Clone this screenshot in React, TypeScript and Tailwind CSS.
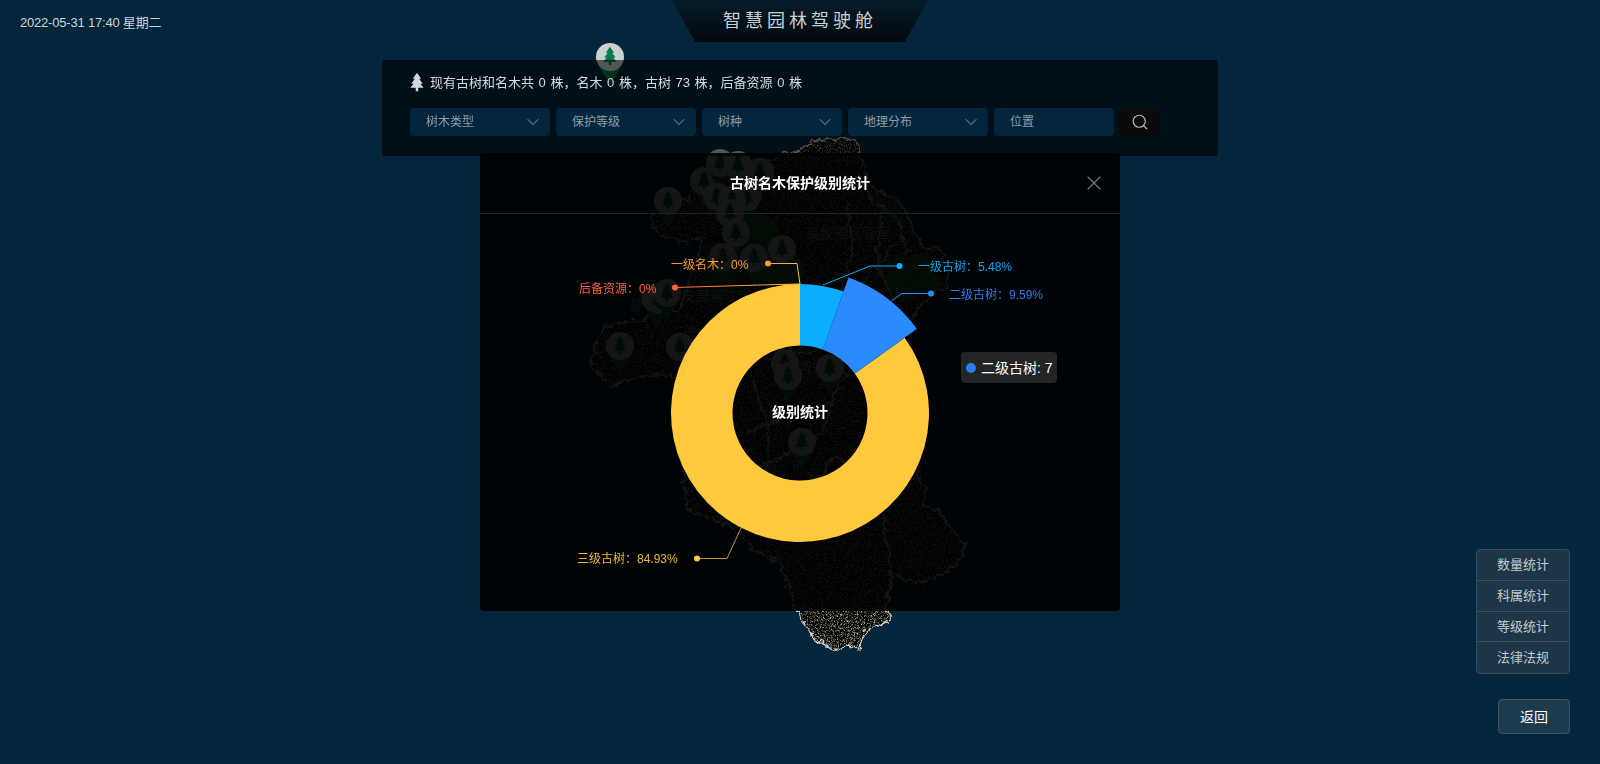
import { Search, ChevronDown, X } from "lucide-react";

const FONT = "font-['Liberation_Sans','Noto_Sans_CJK_SC',sans-serif]";
const TREE = "M12 1 L17 8 H14.5 L19 14 H16 L20 19 H13.5 V23 H10.5 V19 H4 L8 14 H5 L9.5 8 H7 Z";

const ISLAND =
  "M813 137 L852 137 L858 150 L867 185 L900 200 L908 220 L920 245 L940 247 L947 285 L930 290 L913 310 L905 345 L915 420 L917 480 L923 483 L923 503 L937 510 L950 528 L963 540 L958 560 L940 572 L917 582 L905 578 L890 570 L885 597 L883 607 L887 612 L887 617 L878 623 L868 627 L863 630 L857 647 L847 643 L835 648 L823 643 L810 633 L800 620 L797 612 L790 597 L785 580 L778 560 L767 556 L750 547 L743 535 L730 525 L707 515 L685 507 L683 478 L680 430 L690 375 L660 373 L640 373 L610 385 L588 363 L595 335 L610 320 L643 318 L677 307 L690 270 L700 235 L683 240 L660 235 L648 218 L657 207 L683 198 L717 170 L760 160 L790 150 Z";

const PINS: [number, number][] = [
  [610, 57], [668, 201], [704, 181], [720, 163], [738, 165], [760, 172], [717, 197], [747, 197], [732, 200],
  [730, 213], [736, 233], [723, 257], [754, 258], [782, 249], [655, 298], [658, 300], [667, 293], [620, 346],
  [680, 347], [785, 363], [788, 376], [830, 368], [802, 442],
];

const ROADS = [
  "M855 170 L870 200 L895 215 L905 250",
  "M845 200 L850 250 L835 300 L825 350",
  "M880 205 L875 260 L890 300",
  "M895 240 L860 280 L850 300",
  "M745 430 L790 412 L830 400 L845 370",
  "M755 465 L800 445 L820 430 L835 385",
  "M765 360 L790 350 L815 350",
  "M805 470 L815 480 L830 455 L845 460",
  "M880 520 L888 560 L887 600",
  "M750 380 L762 410 L768 450 L760 480",
  "M905 420 L880 470 L882 520",
];

function arc(r0: number, r1: number, a0: number, a1: number) {
  const cx = 800;
  const cy = 413;
  const p = (r: number, a: number) => {
    const t = (a * Math.PI) / 180;
    return `${(cx + r * Math.sin(t)).toFixed(2)} ${(cy - r * Math.cos(t)).toFixed(2)}`;
  };
  const large = a1 - a0 > 180 ? 1 : 0;
  return `M${p(r1, a0)} A${r1} ${r1} 0 ${large} 1 ${p(r1, a1)} L${p(r0, a1)} A${r0} ${r0} 0 ${large} 0 ${p(r0, a0)} Z`;
}

function Pin({ x, y }: { x: number; y: number }) {
  return (
    <g transform={`translate(${x} ${y})`}>
      <path d="M-13 3 C-11 12 -4 20 0 27 C4 20 11 12 13 3 Z" fill="#0c7a48" />
      <circle r="14" fill="#dcdede" opacity="0.92" />
      <path d={TREE} transform="translate(-10 -11) scale(0.83)" fill="#0a7a4c" />
    </g>
  );
}

function MapLayer() {
  return (
    <svg className="absolute inset-0" width="1600" height="764" viewBox="0 0 1600 764">
      <defs>
        <filter id="speck" x="0" y="0" width="100%" height="100%" colorInterpolationFilters="sRGB">
          <feTurbulence type="fractalNoise" baseFrequency="2.3" numOctaves="1" seed="4" />
          <feColorMatrix values="2.4 0 0 0 -1.1  2.3 0.1 0 0 -1.1  2.1 0 0.25 0 -1.1  0 0 0 0 1" />
        </filter>
        <filter id="rough" x="-5%" y="-5%" width="110%" height="110%">
          <feTurbulence type="turbulence" baseFrequency="0.09" numOctaves="2" seed="7" result="t" />
          <feDisplacementMap in="SourceGraphic" in2="t" scale="9" xChannelSelector="R" yChannelSelector="G" />
        </filter>
        <mask id="isleMask" maskUnits="userSpaceOnUse" x="0" y="0" width="1600" height="764">
          <path d={ISLAND} fill="#ffffff" filter="url(#rough)" />
        </mask>
        <clipPath id="isle">
          <path d={ISLAND} />
        </clipPath>
      </defs>
      <rect x="570" y="130" width="410" height="530" filter="url(#speck)" mask="url(#isleMask)" />
      <g filter="url(#rough)">
        <g clipPath="url(#isle)">
          <path d="M735 205 L770 215 L800 262 L803 285 L760 280 L745 240 Z" fill="#0a8a30" opacity="0.75" />
          <path d="M885 258 L925 250 L940 285 L905 300 L880 290 Z" fill="#0a8a30" opacity="0.7" />
          <path d="M870 190 L898 205 L905 225 L885 220 Z" fill="#0a8a30" opacity="0.55" />
          <path d="M700 240 L730 260 L750 290 L700 300 Z" fill="#0a8a30" opacity="0.35" />
        </g>
        {ROADS.map((d) => (
          <path key={d} d={d} fill="none" stroke="#b8b8ae" strokeWidth="2" />
        ))}
        <path d={ISLAND} fill="none" stroke="#cfcfcf" strokeWidth="1.6" />
      </g>
      <g className={FONT} fill="#ffffff" fontSize="14" opacity="0.45">
        <text x="806" y="238">高校园区管理</text>
        <text x="682" y="301">安局蓉江新</text>
        <text x="630" y="310">赣</text>
        <text x="683" y="336">善</text>
        <text x="798" y="373">蓉安</text>
        <text x="765" y="473">真</text>
      </g>
      {PINS.map(([x, y]) => (
        <Pin key={`${x}-${y}`} x={x} y={y} />
      ))}
    </svg>
  );
}

function DropDown({ label }: { label: string }) {
  return (
    <div className="w-[140px] h-7 rounded-[4px] bg-[#04263c] pl-4 pr-[7px] flex items-center justify-between text-xs text-[#8f9ca6]">
      <span>{label}</span>
      <ChevronDown size={20} strokeWidth={1.1} className="text-[#8f9ca6]" />
    </div>
  );
}

function Chart() {
  return (
    <svg className="block" width="640" height="397" viewBox="480 214 640 397">
      <defs>
        <linearGradient id="lo" gradientUnits="userSpaceOnUse" x1="768" y1="263" x2="800" y2="283">
          <stop offset="0" stopColor="#ff9a2e" />
          <stop offset="1" stopColor="#ffc93c" />
        </linearGradient>
        <linearGradient id="lr" gradientUnits="userSpaceOnUse" x1="675" y1="287" x2="800" y2="283">
          <stop offset="0" stopColor="#ff5f3f" />
          <stop offset="1" stopColor="#ffc93c" />
        </linearGradient>
      </defs>
      <path d={arc(67.5, 129, 54.25, 360)} fill="#ffc93d" />
      <path d={arc(67.5, 129, 0, 19.73)} fill="#0badff" />
      <path d={arc(67.5, 144, 19.73, 54.25)} fill="#2a8bff" />

      <polyline points="768,263.5 797,263.5 800,284" fill="none" stroke="url(#lo)" />
      <polyline points="675,287.5 760,285 800,284" fill="none" stroke="url(#lr)" />
      <polyline points="899.5,266 870,266 823,285" fill="none" stroke="#0badff" />
      <polyline points="931,293.5 902,293.5 892,300.5" fill="none" stroke="#2a8bff" />
      <polyline points="697,558.5 727,558.5 741,528" fill="none" stroke="#ffc93d" strokeOpacity="0.75" />

      <circle cx="768" cy="263.5" r="3" fill="#ff9a2e" />
      <circle cx="675" cy="287.5" r="3" fill="#ff5f3f" />
      <circle cx="899.5" cy="266" r="3" fill="#0badff" />
      <circle cx="931" cy="293.5" r="3" fill="#2a8bff" />
      <circle cx="697" cy="558.5" r="3" fill="#ffc93d" />

      <g className={`${FONT} text-xs`}>
        <text x="671" y="269" fill="#ff9a2e">一级名木：0%</text>
        <text x="579" y="293" fill="#ff5f3f">后备资源：0%</text>
        <text x="918" y="271" fill="#0ba5f0">一级古树：5.48%</text>
        <text x="949" y="299" fill="#2a7de8">二级古树：9.59%</text>
        <text x="577" y="563" fill="#eeb836">三级古树：84.93%</text>
      </g>
      <text x="800" y="417" textAnchor="middle" fill="#ffffff" fontSize="14" fontWeight="700" className={FONT}>
        级别统计
      </text>
    </svg>
  );
}

function Modal() {
  return (
    <div className="absolute left-[480px] top-[153px] w-[640px] h-[458px] z-20 rounded-[4px] bg-black/90">
      <div className="relative h-[61px] border-b border-[#1f2222] flex items-center justify-center">
        <span className="text-sm font-bold text-white">古树名木保护级别统计</span>
        <X size={24} strokeWidth={1.1} className="absolute right-[14px] top-[18px] text-[#77797a]" />
      </div>
      <Chart />
      <div className="absolute left-[481px] top-[199px] h-[31px] w-[96px] rounded-[4px] bg-[#232426] flex items-center pl-[5px] text-sm text-white">
        <span className="w-2.5 h-2.5 rounded-full bg-[#2a7de8] mr-[5px]" />
        二级古树: 7
      </div>
    </div>
  );
}

export default function App() {
  return (
    <div className={`relative w-full h-[764px] overflow-hidden bg-[#04263c] ${FONT}`}>
      <MapLayer />

      <div className="relative z-10 grid grid-cols-[1fr_256px_1fr] h-[42px]">
        <div className="pl-5 pt-[14px] text-[13px] leading-[17px] tracking-[-0.2px] text-[#cdd4d8]">2022-05-31 17:40 星期二</div>
        <div className="[clip-path:polygon(0_0,100%_0,91%_100%,9%_100%)] bg-gradient-to-b from-[#061c2b] to-[#03090e] flex items-center justify-center text-lg tracking-[4px] text-[#c8d0d4]">
          智慧园林驾驶舱
        </div>
        <div />
      </div>

      <div className="relative z-10 mt-[18px] ml-[382px] w-[836px] h-[96px] bg-black/60 pl-[28px]">
        <div className="flex items-center h-[46px] text-[13px] [word-spacing:1px] text-[#d6d9db]">
          <svg width="20" height="20" viewBox="0 0 24 24" className="mr-[3px] -mt-[2px] -ml-[3px]">
            <path d={TREE} fill="#d8d8d8" />
          </svg>
          现有古树和名木共 0 株，名木 0 株，古树 73 株，后备资源 0 株
        </div>
        <div className="flex gap-1.5 items-center mt-[2px]">
          <DropDown label="树木类型" />
          <DropDown label="保护等级" />
          <DropDown label="树种" />
          <DropDown label="地理分布" />
          <div className="w-[120px] h-7 rounded-[4px] bg-[#04263c] pl-4 flex items-center text-xs text-[#8f9ca6]">位置</div>
          <div className="w-10 h-7 rounded-[4px] bg-[#0b0b0b] flex items-center justify-center">
            <Search size={18} strokeWidth={1.5} className="text-[#b4bcc2]" />
          </div>
        </div>
      </div>

      <Modal />

      <div className="absolute z-10 right-[30px] bottom-[30px] flex flex-col items-end gap-[25px]">
        <div className="w-[94px] rounded-[4px] border border-[#34495a] bg-[#1e3648] flex flex-col divide-y divide-[#3a4f5f] text-[13px] text-[#c3cace]">
          <div className="h-[30.75px] flex items-center justify-center">数量统计</div>
          <div className="h-[30.75px] flex items-center justify-center">科属统计</div>
          <div className="h-[30.75px] flex items-center justify-center">等级统计</div>
          <div className="h-[30.75px] flex items-center justify-center">法律法规</div>
        </div>
        <div className="w-[72px] h-[35px] rounded-[4px] border border-[#3b5566] bg-[#1e3a4d] flex items-center justify-center text-sm text-white">
          返回
        </div>
      </div>
    </div>
  );
}
